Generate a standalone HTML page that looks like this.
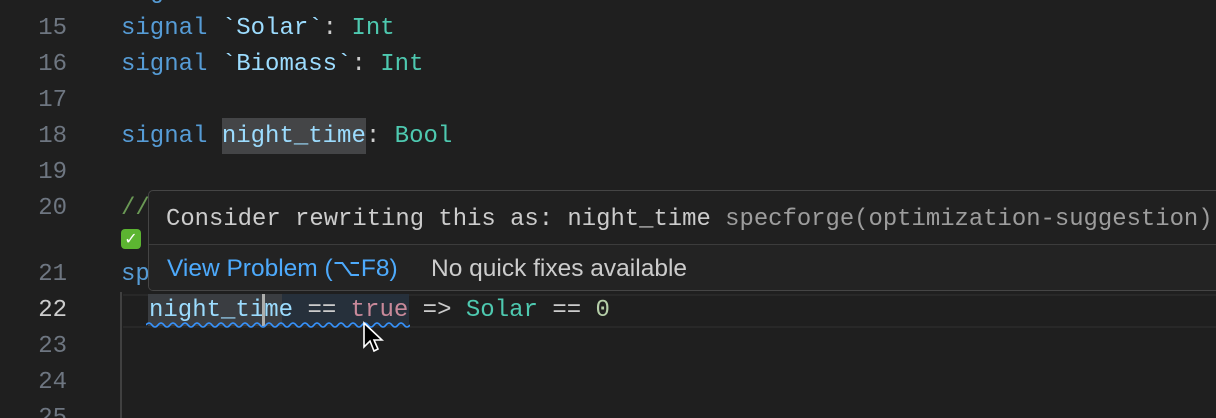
<!DOCTYPE html>
<html><head><meta charset="utf-8"><style>
html,body{margin:0;padding:0;background:#1f1f1f;width:1216px;height:418px;overflow:hidden;position:relative}
.m{font-family:"Liberation Mono","DejaVu Sans Mono",monospace;font-size:24px;white-space:pre;position:absolute;line-height:36px}
.n{color:#6e7681;width:67px;text-align:right;left:0}
.c{left:121px;color:#cccccc}
.k{color:#569cd6}.i{color:#9cdcfe}.t{color:#4ec9b0}.p{color:#cccccc}
</style></head><body>
<div class="m n" style="top:-25px">14</div>
<div class="m n" style="top:11px">15</div>
<div class="m n" style="top:47px">16</div>
<div class="m n" style="top:83px">17</div>
<div class="m n" style="top:119px">18</div>
<div class="m n" style="top:155px">19</div>
<div class="m n" style="top:191px">20</div>
<div class="m n" style="top:257px">21</div>
<div class="m n" style="top:293px;color:#cccccc">22</div>
<div class="m n" style="top:329px">23</div>
<div class="m n" style="top:365px">24</div>
<div class="m n" style="top:401px">25</div>

<div class="m c" style="top:-25px"><span class="k">signal</span> <span class="i">`Wind`</span>: <span class="t">Int</span></div>
<div class="m c" style="top:11px"><span class="k">signal</span> <span class="i">`Solar`</span>: <span class="t">Int</span></div>
<div class="m c" style="top:47px"><span class="k">signal</span> <span class="i">`Biomass`</span>: <span class="t">Int</span></div>
<div style="position:absolute;left:222px;top:118px;width:144px;height:36px;background:#444547"></div>
<div class="m c" style="top:119px"><span class="k">signal</span> <span class="i">night_time</span>: <span class="t">Bool</span></div>
<div class="m c" style="top:191px;color:#6a9955">// spec</div>
<div style="position:absolute;left:121px;top:229px;width:20px;height:20px;border-radius:4px;background:#5cb531;color:#fff;font:bold 16px 'DejaVu Sans',sans-serif;text-align:center;line-height:20px">✓</div>
<div class="m c" style="top:257px"><span class="k">spec</span></div>

<!-- current line -->
<div style="position:absolute;left:123px;top:294px;width:1093px;height:30px;border-top:2px solid #282828;border-bottom:2px solid #282828"></div>
<div style="position:absolute;left:120px;top:292px;width:2px;height:126px;background:#404040"></div>
<div style="position:absolute;left:148px;top:294px;width:134px;height:32px;background:#3a3d41"></div>
<div style="position:absolute;left:282px;top:294px;width:127px;height:32px;background:#26303b"></div>
<div class="m c" style="top:293px;left:149px"><span class="i">night_time</span> <span class="p">==</span> <span style="color:#c8899a">true</span> <span class="p">=&gt;</span> <span class="t">Solar</span> <span class="p">==</span> <span style="color:#b5cea8">0</span></div>
<div style="position:absolute;left:262px;top:294px;width:3px;height:32px;background:#aeafad"></div>
<svg style="position:absolute;left:146px;top:320px" width="264" height="8"><path d="M0 5 q3 -4 6 0 t6 0 t6 0 t6 0 t6 0 t6 0 t6 0 t6 0 t6 0 t6 0 t6 0 t6 0 t6 0 t6 0 t6 0 t6 0 t6 0 t6 0 t6 0 t6 0 t6 0 t6 0 t6 0 t6 0 t6 0 t6 0 t6 0 t6 0 t6 0 t6 0 t6 0 t6 0 t6 0 t6 0 t6 0 t6 0 t6 0 t6 0 t6 0 t6 0 t6 0 t6 0 t6 0 t6 0" stroke="#3794ff" stroke-width="1.6" fill="none"/></svg>
<svg style="position:absolute;left:362px;top:321px" width="26" height="36"><path d="M2 2 L2 26 L8 20 L12 30 L16 28 L12 19 L20 19 Z" fill="#000" stroke="#fff" stroke-width="1.6"/></svg>

<!-- hover -->
<div style="position:absolute;left:148px;top:190px;width:1100px;height:99px;border:1px solid #454545;border-radius:5px;background:#202020;overflow:hidden">
  <div class="m" style="left:17px;top:11px;color:#cccccc;font-size:23.9px">Consider rewriting this as: night_time <span style="color:#9d9d9d">specforge(optimization-suggestion)</span></div>
  <div style="position:absolute;left:0;top:53px;width:100%;height:46px;border-top:1px solid #3c3c3c;background:#232323"></div>
  <div style="position:absolute;left:18px;top:61px;font:24.5px 'Liberation Sans','DejaVu Sans',sans-serif;color:#4daafc;line-height:34px;white-space:nowrap">View Problem (⌥F8)</div>
  <div style="position:absolute;left:282px;top:61px;font:24.5px 'Liberation Sans',sans-serif;color:#cccccc;line-height:34px;white-space:nowrap">No quick fixes available</div>
</div>
</body></html>
